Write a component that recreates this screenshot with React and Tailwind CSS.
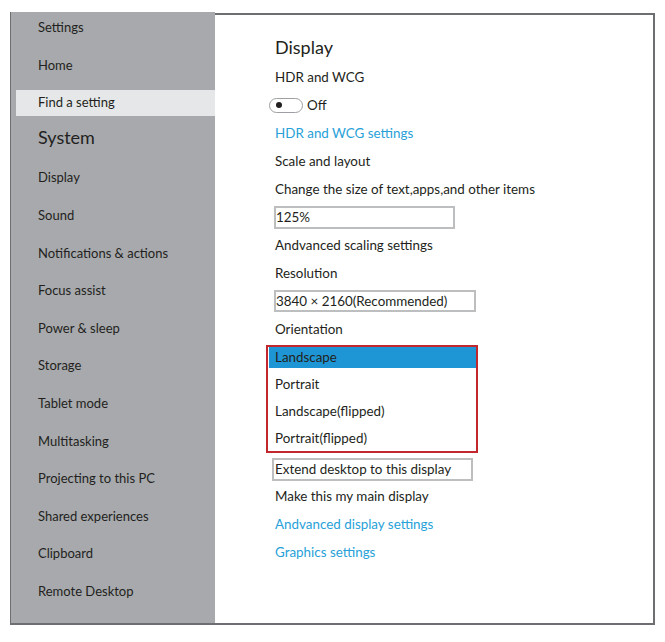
const sideItems = [
    'Settings',
    'Home',
    'Find a setting',
    'System',
    'Display',
    'Sound',
    'Notifications & actions',
    'Focus assist',
    'Power & sleep',
    'Storage',
    'Tablet mode',
    'Multitasking',
    'Projecting to this PC',
    'Shared experiences',
    'Clipboard',
    'Remote Desktop',
];

const orientations = ['Portrait', 'Landscape(flipped)', 'Portrait(flipped)'];

const Sidebar = () => {
    return (
        <aside className="w-[205px] shrink-0 bg-[#a7a9ac] border-l border-[#6d6e71] overflow-hidden text-[13px]">
            <ul className="-mt-[3px] flex flex-col">
                {sideItems.map((item) => {
                    if (item === 'Find a setting') {
                        return (
                            <li key={item} className="h-[37.6px] flex items-center">
                                <div className="w-full h-[26px] ml-[5px] pl-[22px] flex items-center bg-[#e6e7e8]">{item}</div>
                            </li>
                        );
                    }
                    if (item === 'System') {
                        return (
                            <li key={item} className="h-[37.6px] flex items-center pl-[27px] pb-[6px] text-[18px]">{item}</li>
                        );
                    }
                    return (
                        <li key={item} className="h-[37.6px] flex items-center pl-[27px]">{item}</li>
                    );
                })}
            </ul>
        </aside>
    );
};

const Row = ({ children, className = '' }) => (
    <div className={`h-7 flex items-center ${className}`}>{children}</div>
);

const DisplayPanel = () => {
    return (
        <main className="flex-1 mt-px border-t-2 border-r-2 border-[#6d6e71] bg-white pl-[60px] pt-[19px] text-[13.4px]">
            <div className="h-[29px] flex items-center text-[18px] pb-[2px]">Display</div>
            <Row>HDR and WCG</Row>
            <Row>
                <div className="-ml-[6px] w-[34px] h-[15px] rounded-full border border-[#9d9fa2] flex items-center pl-[6px]">
                    <div className="w-[6px] h-[6px] rounded-full bg-[#231f20]" />
                </div>
                <span className="ml-[4px]">Off</span>
            </Row>
            <Row className="text-[#27a1d8]">HDR and WCG settings</Row>
            <Row>Scale and layout</Row>
            <Row>Change the size of text,apps,and other items</Row>
            <div className="h-7 flex items-center">
                <div className="-ml-px w-[181px] h-[23px] border-2 border-[#bcbec0] flex items-center">125%</div>
            </div>
            <Row>Andvanced scaling settings</Row>
            <Row>Resolution</Row>
            <div className="h-7 flex items-center">
                <div className="-ml-px w-[202px] h-[22px] border-2 border-[#bcbec0] flex items-center">3840 × 2160(Recommended)</div>
            </div>
            <Row>Orientation</Row>
            <div className="-ml-[9px] mt-[2px] w-[212px] h-[108px] border-2 border-[#c1272d] pl-px">
                <div className="w-[207px] h-[21px] bg-[#1e96d5] flex items-center pl-[6px]">Landscape</div>
                <div className="mt-[3px] flex flex-col">
                    {orientations.map((o) => (
                        <div key={o} className="h-[27px] flex items-center pl-[6px]">{o}</div>
                    ))}
                </div>
            </div>
            <div className="-ml-[3px] mt-[5px] w-[201px] h-[23px] border-2 border-[#bcbec0] flex items-center pl-px">Extend desktop to this display</div>
            <Row className="mt-px">Make this my main display</Row>
            <Row className="text-[#27a1d8]">Andvanced display settings</Row>
            <Row className="text-[#27a1d8]">Graphics settings</Row>
        </main>
    );
};

const App = () => {
    return (
        <div className="w-[665px] h-[642px] bg-white pt-[12px] pl-[10px] text-[#231f20] font-['Lato','Liberation_Sans',sans-serif]">
            <div className="w-[645px] h-[613px] flex border-b-2 border-[#6d6e71]">
                <Sidebar />
                <DisplayPanel />
            </div>
        </div>
    );
};

export default App;
